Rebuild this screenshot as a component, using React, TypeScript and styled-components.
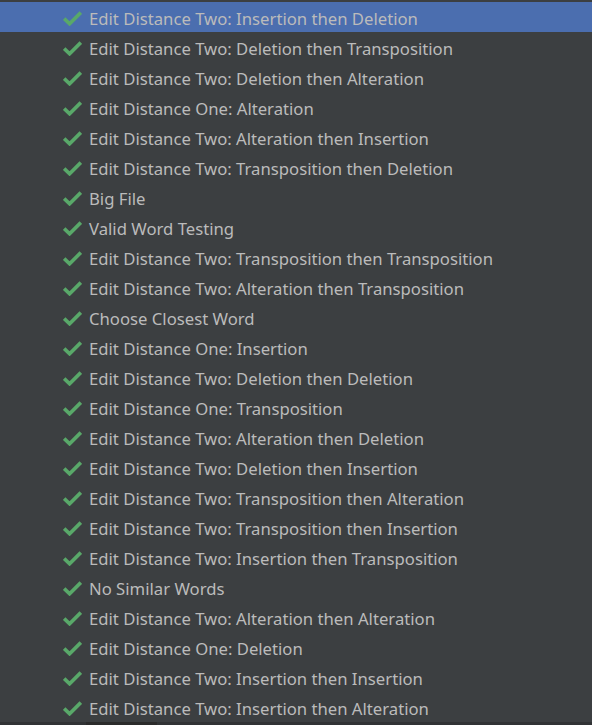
import React from 'react';
import styled, { createGlobalStyle } from 'styled-components';

const GlobalStyle = createGlobalStyle`
  html, body {
    margin: 0;
    padding: 0;
    background: #3c3f41;
    overflow: hidden;
  }
`;

const Panel = styled.div`
  display: flex;
  flex-direction: column;
  height: 725px;
  background: #3c3f41;
  font-family: 'Noto Sans', 'Open Sans', sans-serif;
`;

const List = styled.div`
  flex: 1;
  display: flex;
  flex-direction: column;
  padding-top: 2px;
  overflow: hidden;
`;

const Row = styled.div<{ $selected?: boolean }>`
  display: flex;
  align-items: center;
  gap: 7px;
  height: 30px;
  flex-shrink: 0;
  padding-left: 63px;
  background: ${p => (p.$selected ? '#4b6eaf' : 'transparent')};
`;

const Label = styled.span`
  color: #bbbbbb;
  font-size: 16.7px;
  padding-top: 2px;
  white-space: nowrap;
`;

const ScrollTrack = styled.div`
  display: flex;
  height: 3px;
  background: #313335;
`;

const ScrollThumb = styled.div`
  margin-left: 86px;
  width: 71px;
  background: #2b2b2b;
`;

const Check = () => (
  <svg width="19" height="15" viewBox="0 0 19 15" style={{ marginTop: 2 }}>
    <path
      d="M1.2 7.6 L6.6 12.8 L17.8 1.6"
      fill="none"
      stroke="#59a869"
      strokeWidth="3.6"
      strokeLinecap="butt"
      strokeLinejoin="miter"
    />
  </svg>
);

const tests = [
  'Edit Distance Two: Insertion then Deletion',
  'Edit Distance Two: Deletion then Transposition',
  'Edit Distance Two: Deletion then Alteration',
  'Edit Distance One: Alteration',
  'Edit Distance Two: Alteration then Insertion',
  'Edit Distance Two: Transposition then Deletion',
  'Big File',
  'Valid Word Testing',
  'Edit Distance Two: Transposition then Transposition',
  'Edit Distance Two: Alteration then Transposition',
  'Choose Closest Word',
  'Edit Distance One: Insertion',
  'Edit Distance Two: Deletion then Deletion',
  'Edit Distance One: Transposition',
  'Edit Distance Two: Alteration then Deletion',
  'Edit Distance Two: Deletion then Insertion',
  'Edit Distance Two: Transposition then Alteration',
  'Edit Distance Two: Transposition then Insertion',
  'Edit Distance Two: Insertion then Transposition',
  'No Similar Words',
  'Edit Distance Two: Alteration then Alteration',
  'Edit Distance One: Deletion',
  'Edit Distance Two: Insertion then Insertion',
  'Edit Distance Two: Insertion then Alteration',
];

const App: React.FC = () => (
  <>
    <GlobalStyle />
    <Panel>
      <List>
        {tests.map((name, i) => (
          <Row key={name} $selected={i === 0}>
            <Check />
            <Label>{name}</Label>
          </Row>
        ))}
      </List>
      <ScrollTrack>
        <ScrollThumb />
      </ScrollTrack>
    </Panel>
  </>
);

export default App;
